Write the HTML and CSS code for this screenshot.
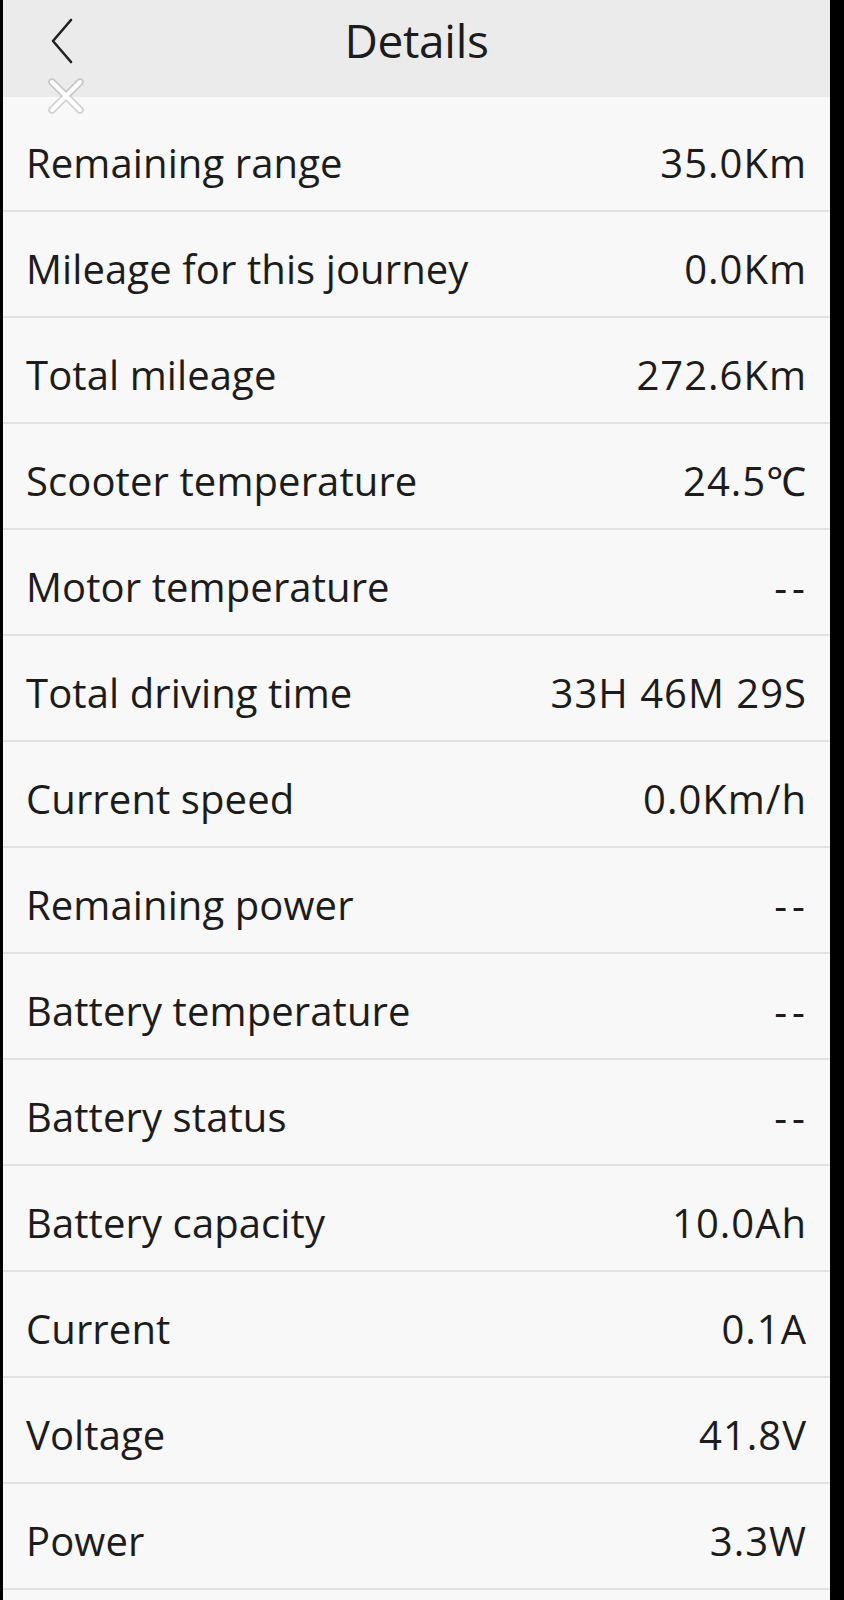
FILE: index.html
```html
<!DOCTYPE html>
<html lang="en">
<head>
    <meta charset="UTF-8">
    <meta name="viewport" content="width=device-width, initial-scale=1.0">
    <title>Details</title>
    <link rel="stylesheet" href="styles.css">
</head>
<body>
    <div class="screen">
        <header class="top-bar">
            <button type="button" class="back-button" aria-label="Back">
                <svg width="28" height="48" viewBox="0 0 28 48">
                    <polyline points="22,3 4,24 22,45" fill="none" stroke="#222" stroke-width="2.6" stroke-linecap="round" stroke-linejoin="round"/>
                </svg>
            </button>
            <h1 class="title">Details</h1>
            <span class="close-mark" aria-hidden="true">
                <svg width="40" height="40" viewBox="0 0 40 40">
                    <g stroke="#8a8a8a" stroke-width="7.5" stroke-linecap="round" opacity="0.35">
                        <line x1="6" y1="6" x2="34" y2="34"/>
                        <line x1="34" y1="6" x2="6" y2="34"/>
                    </g>
                    <g stroke="#ffffff" stroke-width="4" stroke-linecap="round">
                        <line x1="6" y1="6" x2="34" y2="34"/>
                        <line x1="34" y1="6" x2="6" y2="34"/>
                    </g>
                </svg>
            </span>
        </header>

        <ul class="detail-list">
            <li class="detail-row"><span class="label">Remaining range</span><span class="value">35.0Km</span></li>
            <li class="detail-row"><span class="label">Mileage for this journey</span><span class="value">0.0Km</span></li>
            <li class="detail-row"><span class="label">Total mileage</span><span class="value">272.6Km</span></li>
            <li class="detail-row"><span class="label">Scooter temperature</span><span class="value">24.5℃</span></li>
            <li class="detail-row"><span class="label">Motor temperature</span><span class="value empty">--</span></li>
            <li class="detail-row"><span class="label">Total driving time</span><span class="value">33H 46M 29S</span></li>
            <li class="detail-row"><span class="label">Current speed</span><span class="value">0.0Km/h</span></li>
            <li class="detail-row"><span class="label">Remaining power</span><span class="value empty">--</span></li>
            <li class="detail-row"><span class="label">Battery temperature</span><span class="value empty">--</span></li>
            <li class="detail-row"><span class="label">Battery status</span><span class="value empty">--</span></li>
            <li class="detail-row"><span class="label">Battery capacity</span><span class="value">10.0Ah</span></li>
            <li class="detail-row"><span class="label">Current</span><span class="value">0.1A</span></li>
            <li class="detail-row"><span class="label">Voltage</span><span class="value">41.8V</span></li>
            <li class="detail-row"><span class="label">Power</span><span class="value">3.3W</span></li>
        </ul>
    </div>
</body>
</html>
```

FILE: styles.css
```css
html, body {
    margin: 0;
    padding: 0;
    background-color: #000000;
}
body {
    font-family: "Open Sans", "Noto Sans", "DejaVu Sans", sans-serif;
    color: #1c1c1c;
}
.screen {
    width: 827px;
    min-height: 1600px;
    margin-left: 3px;
    background-color: #f8f8f8;
}
.top-bar {
    position: relative;
    height: 97px;
    display: flex;
    justify-content: center;
    background-color: #ebebeb;
}
.back-button {
    position: absolute;
    left: 46px;
    top: 17px;
    padding: 0;
    border: none;
    background: none;
    line-height: 0;
}
.title {
    margin: 0;
    padding-top: 8px;
    font-size: 46px;
    font-weight: 400;
    line-height: 64px;
    letter-spacing: -0.3px;
}
.close-mark {
    position: absolute;
    left: 43px;
    top: 76px;
    line-height: 0;
}
.detail-list {
    list-style: none;
    margin: 0;
    padding: 9px 0 0;
}
.detail-row {
    box-sizing: content-box;
    height: 96px;
    padding: 8px 24px 0 23px;
    display: flex;
    justify-content: space-between;
    align-items: center;
    border-bottom: 2px solid #e2e2e2;
    font-size: 40px;
}
.label {
    letter-spacing: 0.1px;
}
.value {
    text-align: right;
    letter-spacing: 1px;
    margin-right: -1px;
}
.value.empty {
    letter-spacing: 5px;
    margin-right: -4px;
}
```
